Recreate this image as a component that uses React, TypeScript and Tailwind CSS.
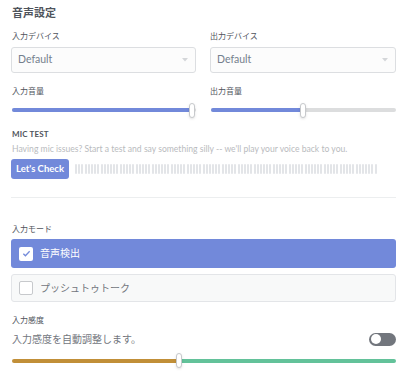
import React from 'react'

const font = { fontFamily: 'Lato, "Noto Sans CJK JP", sans-serif' }

function Select() {
  return (
    <div className="flex h-[26px] items-center justify-between rounded-[3px] border border-[#dcdee1] bg-[#fcfcfc] pl-[6px] pr-[7px]">
      <span className="text-[10.5px] text-[#747f8d]">Default</span>
      <svg width="6" height="4" viewBox="0 0 6 4">
        <path d="M0 0h6L3 3.5z" fill="#d4d6d9" />
      </svg>
    </div>
  )
}

function Slider({ pct }: { pct: number }) {
  return (
    <div className="relative h-[16px]">
      <div className="absolute left-[1px] right-0 top-[5px] h-[4px] rounded-full bg-[#dcddde]" />
      <div
        className="absolute left-[1px] top-[5px] h-[4px] rounded-full bg-[#7289da]"
        style={{ width: `${pct}%` }}
      />
      <div
        className="absolute top-0 h-[15px] w-[6px] -translate-x-1/2 rounded-[3px] border border-[#c7c9cc] bg-white shadow-sm"
        style={{ left: `${pct}%` }}
      />
    </div>
  )
}

function Label({ children }: { children: React.ReactNode }) {
  return <div className="text-[8px] leading-[12px] text-[#4f545c]">{children}</div>
}

export default function App() {
  return (
    <div className="h-[384px] w-[400px] overflow-hidden bg-white pl-[11px] pr-[4px] pt-[5px]" style={font}>
      <h1 className="pl-[1px] text-[11px] font-bold leading-[16px] text-[#4f545c]">音声設定</h1>

      <div className="mt-[9px] grid grid-cols-[185px_186px] gap-x-[14px]">
        <div>
          <div className="pl-[1px]"><Label>入力デバイス</Label></div>
          <div className="mt-[5px]"><Select /></div>
          <div className="mt-[12px] pl-[1px]"><Label>入力音量</Label></div>
          <div className="mt-[6px]"><Slider pct={98} /></div>
        </div>
        <div>
          <Label>出力デバイス</Label>
          <div className="mt-[5px]"><Select /></div>
          <div className="mt-[12px]"><Label>出力音量</Label></div>
          <div className="mt-[6px]"><Slider pct={50} /></div>
        </div>
      </div>

      <div className="mt-[9px] pl-[1px] text-[8px] font-bold uppercase leading-[12px] tracking-[0.02em] text-[#4f545c]">
        Mic Test
      </div>
      <div className="mt-[3px] pl-[1px] text-[8.6px] leading-[12px] text-[#b9bbbe]">
        Having mic issues? Start a test and say something silly -- we'll play your voice back to you.
      </div>
      <div className="mt-[4px] flex items-center gap-[6px]">
        <button className="h-[20px] w-[58px] rounded-[3px] bg-[#7289da] text-[9.5px] font-bold text-white">
          Let's Check
        </button>
        <div className="flex h-[10px] gap-[1.2px]">
          {Array.from({ length: 95 }).map((_, i) => (
            <div key={i} className="h-full w-[2px] rounded-[1px] bg-[#e3e5e8]" />
          ))}
        </div>
      </div>

      <div className="mt-[18px] border-t border-[#eceeef]" />

      <div className="mt-[25px] pl-[1px]"><Label>入力モード</Label></div>
      <div className="mt-[4px] flex h-[29px] items-center gap-[7px] rounded-[3px] bg-[#7289da] pl-[8px]">
        <div className="flex h-[14px] w-[14px] items-center justify-center rounded-[2px] bg-white">
          <svg width="9" height="9" viewBox="0 0 10 10">
            <path d="M1.5 5.2l2.3 2.3L8.5 2.5" fill="none" stroke="#7289da" strokeWidth="1.4" />
          </svg>
        </div>
        <span className="text-[10px] text-white">音声検出</span>
      </div>
      <div className="mt-[6px] flex h-[28px] items-center gap-[7px] rounded-[3px] border border-[#e3e5e8] bg-[#f8f9f9] pl-[7px]">
        <div className="h-[14px] w-[14px] rounded-[2px] border border-[#c7c9cc] bg-white" />
        <span className="text-[10px] text-[#72767d]">プッシュトゥトーク</span>
      </div>

      <div className="mt-[12px] pl-[1px]"><Label>入力感度</Label></div>
      <div className="mt-[6px] flex items-center justify-between pl-[1px]">
        <span className="text-[10px] leading-[14px] text-[#72767d]">入力感度を自動調整します。</span>
        <div className="flex h-[13px] w-[27px] items-center rounded-full bg-[#72767d] pl-[2px]">
          <div className="h-[10px] w-[10px] rounded-full bg-white" />
        </div>
      </div>
      <div className="relative mt-[7px] h-[16px]">
        <div className="absolute left-[1px] top-[6px] h-[4px] w-[165px] rounded-l-full bg-[#c18f38]" />
        <div className="absolute left-[166px] right-0 top-[6px] h-[4px] rounded-r-full bg-[#63c29a]" />
        <div className="absolute left-[165px] top-0 h-[15px] w-[6px] rounded-[3px] border border-[#c7c9cc] bg-white shadow-sm" />
      </div>
    </div>
  )
}
